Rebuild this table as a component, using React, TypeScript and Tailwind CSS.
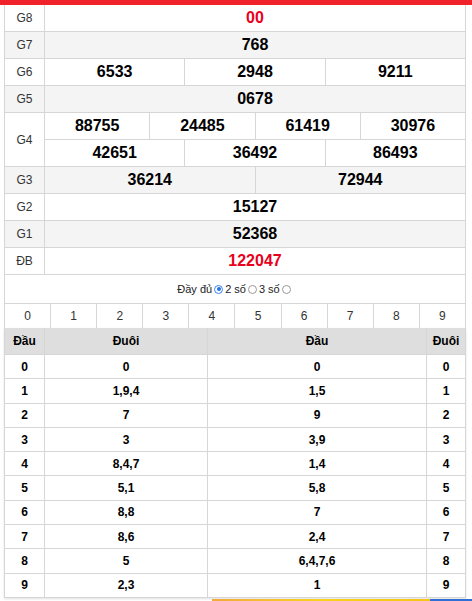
import React from "react";

const BORDER = "border-[#d6d6d6]";

type Prize = { label: string; values: string[][]; red?: boolean };

const PRIZES: Prize[] = [
  { label: "G8", values: [["00"]], red: true },
  { label: "G7", values: [["768"]] },
  { label: "G6", values: [["6533", "2948", "9211"]] },
  { label: "G5", values: [["0678"]] },
  { label: "G4", values: [["88755", "24485", "61419", "30976"], ["42651", "36492", "86493"]] },
  { label: "G3", values: [["36214", "72944"]] },
  { label: "G2", values: [["15127"]] },
  { label: "G1", values: [["52368"]] },
  { label: "ĐB", values: [["122047"]], red: true },
];

const LOTO: [string, string, string, string][] = [
  ["0", "0", "0", "0"],
  ["1", "1,9,4", "1,5", "1"],
  ["2", "7", "9", "2"],
  ["3", "3", "3,9", "3"],
  ["4", "8,4,7", "1,4", "4"],
  ["5", "5,1", "5,8", "5"],
  ["6", "8,8", "7", "6"],
  ["7", "8,6", "2,4", "7"],
  ["8", "5", "6,4,7,6", "8"],
  ["9", "2,3", "1", "9"],
];

function PrizeRow({ prize, index }: { prize: Prize; index: number }) {
  const bg = index % 2 === 1 ? "bg-[#f4f4f4]" : "bg-white";
  return (
    <div className={`flex border-b ${BORDER} ${bg}`}>
      <div
        className={`w-[40px] shrink-0 border-r ${BORDER} flex items-center justify-center text-[12px] text-[#333]`}
      >
        {prize.label}
      </div>
      <div className="flex-1 flex flex-col">
        {prize.values.map((line, li) => (
          <div
            key={li}
            className={`flex h-[26px] ${li > 0 ? `border-t ${BORDER} h-[27px]` : ""}`}
          >
            {line.map((v, vi) => (
              <div
                key={vi}
                className={`flex-1 flex items-center justify-center font-bold text-[16px] ${
                  vi > 0 ? `border-l ${BORDER}` : ""
                } ${prize.red ? "text-[#e8001c]" : "text-black"}`}
              >
                {v}
              </div>
            ))}
          </div>
        ))}
      </div>
    </div>
  );
}

function Radio({ checked }: { checked?: boolean }) {
  return (
    <span
      className={`inline-block w-[9px] h-[9px] rounded-full border mx-[2px] align-[-1px] ${
        checked ? "border-[#3b82f6] bg-white p-[1.5px]" : "border-[#999] bg-white"
      }`}
    >
      {checked && <span className="block w-full h-full rounded-full bg-[#1a73e8]" />}
    </span>
  );
}

export default function App() {
  return (
    <div
      className="w-[472px] h-[601px] overflow-hidden bg-white text-[#333]"
      style={{ fontFamily: '"Liberation Sans", Arial, sans-serif' }}
    >
      <div className="h-[5px] bg-[#f0232b]" />

      <div className="ml-[4px] w-[462px]">
        {/* prize table */}
        <div className={`border-x ${BORDER}`}>
          {PRIZES.map((p, i) => (
            <PrizeRow key={p.label} prize={p} index={i} />
          ))}
        </div>

        {/* display mode */}
        <div
          className={`h-[29px] border-x border-b ${BORDER} flex items-center justify-center text-[11px] text-[#222]`}
        >
          <span>Đầy đủ</span>
          <Radio checked />
          <span>2 số</span>
          <Radio />
          <span>3 số</span>
          <Radio />
        </div>

        {/* digit filter */}
        <div className={`flex h-[24px] border-x ${BORDER}`}>
          {Array.from({ length: 10 }, (_, i) => (
            <div
              key={i}
              className={`flex-1 flex items-center justify-center text-[12px] ${
                i > 0 ? `border-l ${BORDER}` : ""
              }`}
            >
              {i}
            </div>
          ))}
        </div>

        {/* loto table */}
        <div className={`border-x border-b ${BORDER} shadow-[0_1px_2px_rgba(0,0,0,0.12)]`}>
          <div className="flex h-[26px] bg-[#dedede] font-bold text-[12px] text-black">
            <div className={`w-[40px] flex items-center justify-center border-r ${BORDER}`}>Đầu</div>
            <div className={`w-[163px] flex items-center justify-center border-r ${BORDER}`}>Đuôi</div>
            <div className={`w-[219px] flex items-center justify-center border-r ${BORDER}`}>Đầu</div>
            <div className="flex-1 flex items-center justify-center">Đuôi</div>
          </div>
          {LOTO.map((r, i) => (
            <div
              key={i}
              className={`flex h-[24.3px] font-bold text-[12px] text-black border-t ${BORDER}`}
            >
              <div className={`w-[40px] flex items-center justify-center border-r ${BORDER}`}>{r[0]}</div>
              <div className={`w-[163px] flex items-center justify-center border-r ${BORDER}`}>{r[1]}</div>
              <div className={`w-[219px] flex items-center justify-center border-r ${BORDER}`}>{r[2]}</div>
              <div className="flex-1 flex items-center justify-center">{r[3]}</div>
            </div>
          ))}
        </div>
      </div>

      <div className="flex ml-[212px] mt-[1px] h-[6px]">
        <div className="w-[218px] bg-gradient-to-r from-[#f2a93b] via-[#f9d21c] to-[#f5c518]" />
        <div className="flex-1 bg-[#2f6fd6]" />
      </div>
    </div>
  );
}
